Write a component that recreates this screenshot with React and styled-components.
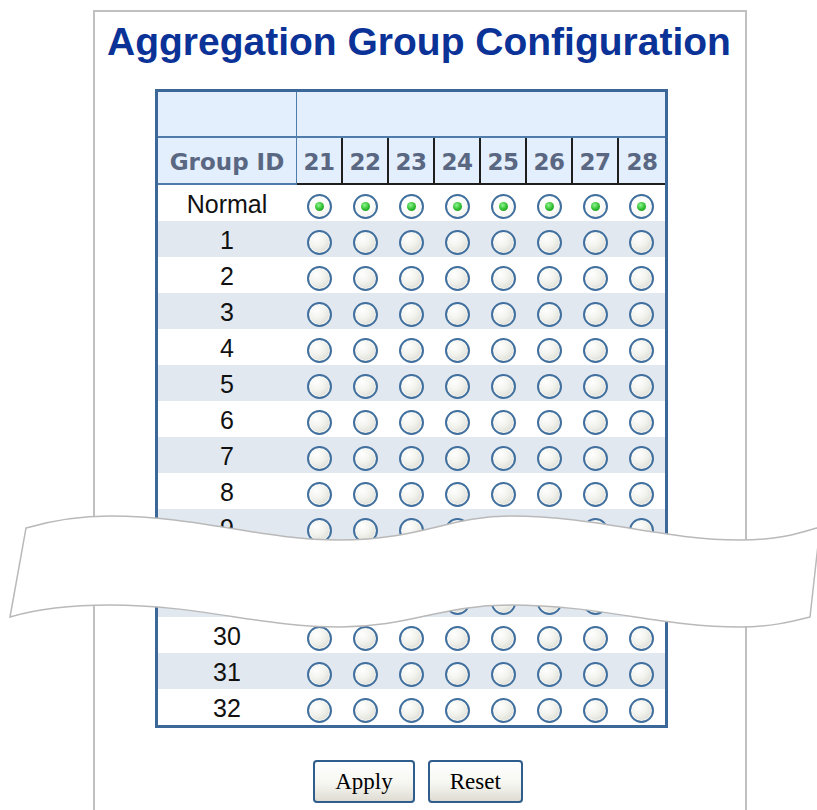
import React from 'react';
import styled, { createGlobalStyle } from 'styled-components';

const GlobalStyle = createGlobalStyle`
    body {
        margin: 0;
        background: #ffffff;
    }
`;

const ports = [21, 22, 23, 24, 25, 26, 27, 28];
const groups = ['Normal', '1', '2', '3', '4', '5', '6', '7', '8', '9', '10', '29', '30', '31', '32'];

const Page = styled.div`
    position: relative;
    width: 817px;
    height: 810px;
    overflow: hidden;
    padding: 10px 0 0 93px;
    box-sizing: border-box;
`;

const Panel = styled.div`
    width: 650px;
    min-height: 800px;
    border: 2px solid #c0c0c0;
    border-bottom: none;
    display: flex;
    flex-direction: column;
`;

const Title = styled.h1`
    margin: 8px 0 0 12px;
    font-family: 'Liberation Sans', Arial, sans-serif;
    font-weight: bold;
    font-size: 39px;
    line-height: 44px;
    color: #0b3297;
    white-space: nowrap;
`;

const Table = styled.div`
    margin: 25px 0 0 60px;
    width: 507px;
    border: 3px solid #3b6898;
`;

const HeadTop = styled.div`
    display: grid;
    grid-template-columns: 139px 1fr;
    height: 46px;
    box-sizing: border-box;
    background: #e3effc;
    border-bottom: 2px solid #4f7cab;
`;

const BlankHead = styled.div`
    border-right: ${p => (p.$divider ? '1px solid #4f7cab' : 'none')};
`;

const Row = styled.div`
    display: grid;
    grid-template-columns: 139px repeat(8, 46px);
    height: ${p => (p.$head ? '47px' : '36px')};
    background: ${p => (p.$head ? '#e3effc' : p.$shaded ? '#e1e8f0' : '#ffffff')};
`;

const HeadCell = styled.div`
    box-sizing: border-box;
    padding-top: 4px;
    line-height: 41px;
    text-align: center;
    font-family: 'DejaVu Sans', Verdana, sans-serif;
    font-weight: bold;
    font-size: 23px;
    color: #5a6782;
    border-bottom: 2px solid ${p => (p.$group ? '#4f7cab' : '#1e1e1e')};
    border-right: ${p => (p.$group ? '1px solid #4f7cab' : p.$last ? 'none' : '2px solid #1e1e1e')};
    letter-spacing: ${p => (p.$group ? '0' : '-0.5px')};
`;

const LabelCell = styled.div`
    border-right: 1px solid transparent;
    text-align: center;
    font-family: 'Liberation Sans', Tahoma, sans-serif;
    font-size: 25px;
    line-height: 36px;
    padding-top: 1px;
    box-sizing: border-box;
    color: #111111;
`;

const RadioCell = styled.div`
    display: flex;
    align-items: center;
    justify-content: center;
    padding: 5px 2px 0 0;
    box-sizing: border-box;
`;

const Radio = styled.span`
    width: 25px;
    height: 25px;
    box-sizing: border-box;
    border-radius: 50%;
    border: 2px solid #41709f;
    box-shadow: inset 0 0 0 1px rgba(255, 255, 255, 0.6);
    background: ${p => (p.$checked
        ? 'radial-gradient(circle at 40% 35%, #ffffff 0%, #fafaf7 55%, #e6e6df 100%)'
        : 'radial-gradient(circle at 35% 30%, #ffffff 0%, #f1f1ec 45%, #d2d2ca 100%)')};
    display: flex;
    align-items: center;
    justify-content: center;

    &::after {
        content: '';
        display: ${p => (p.$checked ? 'block' : 'none')};
        width: 9px;
        height: 9px;
        border-radius: 50%;
        background: radial-gradient(circle at 40% 35%, #8ef58e 0%, #2dbb2d 55%, #14901a 100%);
    }
`;

const ButtonRow = styled.div`
    display: flex;
    justify-content: center;
    gap: 13px;
    margin-top: 32px;
    padding-right: 4px;
`;

const Button = styled.button`
    height: 43px;
    padding: 0 20px;
    border: 2px solid #2f5d8d;
    border-radius: 4px;
    background: linear-gradient(#ffffff 0%, #f6f6f1 55%, #dedcd2 100%);
    font-family: 'Liberation Serif', 'Times New Roman', serif;
    font-size: 23px;
    color: #000000;
    cursor: pointer;
`;

const Tear = styled.svg`
    position: absolute;
    top: 0;
    left: 0;
    pointer-events: none;
`;

const App = () => (
    <Page>
        <GlobalStyle />
        <Panel>
            <Title>Aggregation Group Configuration</Title>
            <Table>
                <HeadTop>
                    <BlankHead $divider />
                    <BlankHead />
                </HeadTop>
                <Row $head>
                    <HeadCell $group>Group ID</HeadCell>
                    {ports.map((p, i) => (
                        <HeadCell key={p} $last={i === ports.length - 1}>{p}</HeadCell>
                    ))}
                </Row>
                {groups.map((g, idx) => (
                    <Row key={g} $shaded={idx % 2 === 1}>
                        <LabelCell>{g}</LabelCell>
                        {ports.map(p => (
                            <RadioCell key={p}>
                                <Radio $checked={g === 'Normal'} />
                            </RadioCell>
                        ))}
                    </Row>
                ))}
            </Table>
            <ButtonRow>
                <Button type="button">Apply</Button>
                <Button type="button">Reset</Button>
            </ButtonRow>
        </Panel>
        {/* torn-paper strip that hides the elided rows */}
        <Tear width="817" height="810" viewBox="0 0 817 810">
            <path
                d="M26 528 C50 521 80 516 110 516 C200 516 260 540 340 540 C420 540 450 516 510 516 C600 516 660 540 740 540 C780 540 800 533 820 527 L810 617 C790 622 770 627 740 627 C660 627 600 605 510 605 C440 605 410 627 340 627 C260 627 200 605 110 605 C60 605 30 611 10 617 Z"
                fill="#ffffff"
                stroke="#b9b9b9"
                strokeWidth="1.5"
            />
        </Tear>
    </Page>
);

export default App;
